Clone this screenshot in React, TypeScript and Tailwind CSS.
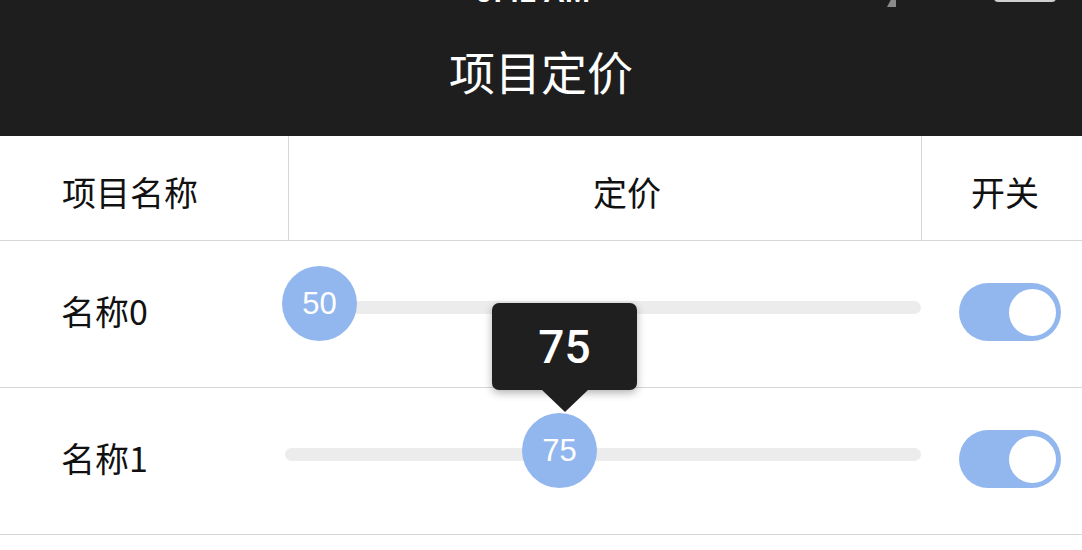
const CJK = "font-['Noto_Sans_CJK_SC',sans-serif]";
const NUM = "font-['Liberation_Sans','Noto_Sans_CJK_SC',sans-serif]";

const ROWS = [
  { name: "名称0", value: 50, thumb: -3, tip: false },
  { name: "名称1", value: 75, thumb: 237, tip: true },
];

function Toggle() {
  return (
    <div className="w-[102px] h-[58px] rounded-full bg-[#92b7ee] flex items-center justify-end pr-[5px]">
      <div className="w-[47px] h-[47px] rounded-full bg-white" />
    </div>
  );
}

function Slider({ value, thumb, tip }: { value: number; thumb: number; tip: boolean }) {
  return (
    <div className="relative ml-[-4px] w-[636px] h-[13px] rounded-full bg-[#ececec]">
      <div
        className="absolute top-[-35px] w-[75px] h-[75px] rounded-full bg-[#92b7ee] flex items-center justify-center"
        style={{ left: thumb }}
      >
        <span className={`${NUM} text-[31px] text-white leading-none`}>{value}</span>
        {tip && (
          <div className="absolute bottom-[76px] left-[-30px] w-[145px] flex flex-col items-center z-10">
            <div className="w-[145px] h-[87px] rounded-[7px] bg-[#1f1f1f] shadow-[0_3px_8px_rgba(0,0,0,0.3)] flex items-center justify-center">
              <span className="font-['Roboto','Liberation_Sans',sans-serif] text-[46px] font-medium text-white leading-none">{value}</span>
            </div>
            <div className="w-0 h-0 border-l-[23px] border-r-[23px] border-t-[22px] border-l-transparent border-r-transparent border-t-[#1f1f1f]" />
          </div>
        )}
      </div>
    </div>
  );
}

export default function App() {
  return (
    <div className={`w-[1082px] h-[550px] bg-white overflow-hidden ${CJK}`}>
      <div className="h-[136px] bg-[#1e1e1e] relative flex items-center justify-center">
        {/* status bar, mostly scrolled off the top */}
        <div className="absolute top-0 left-0 right-0 h-[8px] overflow-hidden">
          <div className={`${NUM} absolute top-[-23px] left-[476px] text-[30px] leading-[30px] text-white font-semibold`}>9:41 AM</div>
          <div className="absolute top-[-10px] left-[887px] w-0 h-0 border-l-[9px] border-l-transparent border-b-[17px] border-b-[#8a8a8a]" />
          <div className="absolute top-[-20px] left-[994px] w-[62px] h-[22px] rounded-[4px] border-2 border-[#cfcfcf]" />
        </div>
        <h1 className="text-[46px] text-white leading-none pt-[4px]">项目定价</h1>
      </div>

      <div className="grid grid-cols-[289px_633px_1fr] h-[105px] border-b border-[#d6d6d6] text-[34px] text-[#111]">
        <div className="border-r border-[#d6d6d6] flex items-center pl-[62px] pt-[6px]">项目名称</div>
        <div className="border-r border-[#d6d6d6] flex items-center pl-[304px] pt-[6px]">定价</div>
        <div className="flex items-center pl-[49px] pt-[6px]">开关</div>
      </div>

      {ROWS.map((r) => (
        <div key={r.name} className="grid grid-cols-[289px_633px_1fr] h-[147px] border-b border-[#d6d6d6]">
          <div className="pl-[61px] pt-[50px] text-[34px] leading-[40px] text-[#111]">{r.name}</div>
          <div className="pt-[60px]">
            <Slider value={r.value} thumb={r.thumb} tip={r.tip} />
          </div>
          <div className="pl-[37px] pt-[42px]">
            <Toggle />
          </div>
        </div>
      ))}
    </div>
  );
}
